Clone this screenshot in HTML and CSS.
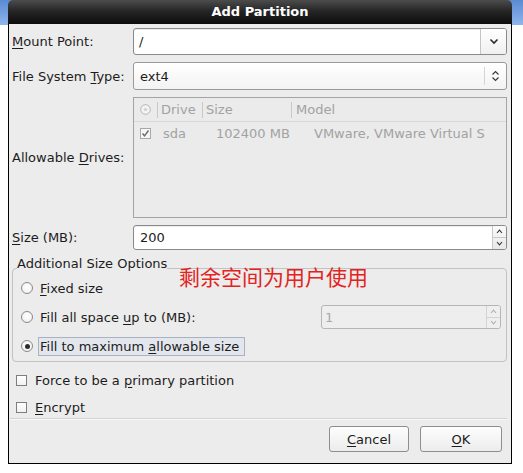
FILE: index.html
```html
<!DOCTYPE html>
<html>
<head>
<meta charset="utf-8">
<link rel="stylesheet" href="styles.css">
</head>
<body>
<div class="window">
  <div class="titlebar">Add Partition</div>
  <div class="content">
    <div class="form">
      <div class="lbl"><u>M</u>ount Point:</div>
      <div class="combo-entry">
        <span class="entry-text">/</span>
        <span class="combo-btn"><svg width="10" height="7" viewBox="0 0 10 7"><path d="M1.5 1.5 L5 5 L8.5 1.5" fill="none" stroke="#2a2a2a" stroke-width="1.6"/></svg></span>
      </div>

      <div class="lbl">File System <u>T</u>ype:</div>
      <div class="combo-select">
        <span class="entry-text">ext4</span>
        <span class="select-btn"><svg width="9" height="12" viewBox="0 0 9 12"><path d="M1.5 4.5 L4.5 1.5 L7.5 4.5 M1.5 7.5 L4.5 10.5 L7.5 7.5" fill="none" stroke="#3a3a3a" stroke-width="1.2"/></svg></span>
      </div>

      <div class="lbl">Allowable <u>D</u>rives:</div>
      <div class="drives">
        <div class="thead">
          <div class="th c0"><svg width="11" height="11" viewBox="0 0 11 11"><circle cx="5.5" cy="5.5" r="4.8" fill="#f4f4f4" stroke="#b4b4b4"/><circle cx="5.5" cy="5.5" r="1.6" fill="#cfcfcf"/></svg></div>
          <div class="th c1">Drive</div>
          <div class="th c2">Size</div>
          <div class="th c3">Model</div>
        </div>
        <div class="trow">
          <div class="td c0"><svg width="11" height="11" viewBox="0 0 11 11"><rect x="0.5" y="0.5" width="10" height="10" fill="#f6f6f6" stroke="#a8a8a8"/><path d="M2.5 5.5 L4.5 7.8 L8.5 2.5" fill="none" stroke="#6a6a6a" stroke-width="1.4"/></svg></div>
          <div class="td c1">sda</div>
          <div class="td c2">102400 MB</div>
          <div class="td c3">VMware, VMware Virtual S</div>
        </div>
      </div>

      <div class="lbl"><u>S</u>ize (MB):</div>
      <div class="spin">
        <span class="entry-text">200</span>
        <span class="spin-btns">
          <span class="sb"><svg width="7" height="5" viewBox="0 0 7 5"><path d="M1 4 L3.5 1.2 L6 4" fill="none" stroke="#333" stroke-width="1.1"/></svg></span>
          <span class="sb"><svg width="7" height="5" viewBox="0 0 7 5"><path d="M1 1 L3.5 3.8 L6 1" fill="none" stroke="#333" stroke-width="1.1"/></svg></span>
        </span>
      </div>
    </div>

    <fieldset class="sizeopts">
      <legend>Additional Size Options</legend>
      <div class="opt opt1">
        <span class="radio"></span><span class="opt-lbl"><u>F</u>ixed size</span>
      </div>
      <div class="opt opt2">
        <span class="radio"></span><span class="opt-lbl">Fill all space <u>u</u>p to (MB):</span>
        <div class="spin spin-dis">
          <span class="entry-text">1</span>
          <span class="spin-btns">
            <span class="sb"><svg width="7" height="5" viewBox="0 0 7 5"><path d="M1 4 L3.5 1.2 L6 4" fill="none" stroke="#b0b0b0" stroke-width="1.1"/></svg></span>
            <span class="sb"><svg width="7" height="5" viewBox="0 0 7 5"><path d="M1 1 L3.5 3.8 L6 1" fill="none" stroke="#b0b0b0" stroke-width="1.1"/></svg></span>
          </span>
        </div>
      </div>
      <div class="opt opt3">
        <span class="radio on"></span><span class="opt-lbl focus">Fill to maximum <u>a</u>llowable size</span>
      </div>
    </fieldset>

    <div class="check check1"><span class="cbox"></span><span>Force to be a <u>p</u>rimary partition</span></div>
    <div class="check check2"><span class="cbox"></span><span><u>E</u>ncrypt</span></div>

    <div class="sep"></div>

    <div class="buttons">
      <button class="btn btn-cancel"><u>C</u>ancel</button>
      <button class="btn btn-ok"><u>O</u>K</button>
    </div>
  </div>
  <div class="annot">剩余空间为用户使用</div>
</div>
</body>
</html>
```

FILE: styles.css
```css
* { box-sizing: border-box; }
html, body { margin: 0; padding: 0; }
body {
  width: 523px;
  height: 473px;
  overflow: hidden;
  background-color: #ffffff;
  background-image: linear-gradient(to bottom, #5a8ad3, #8fb6ec);
  background-repeat: no-repeat;
  background-size: 100% 25px;
  font-family: "DejaVu Sans", sans-serif;
  font-size: 13px;
  color: #1c1c1c;
}
u { text-decoration: underline; text-underline-offset: 2px; }

.window {
  position: relative;
  margin-left: 8px;
  width: 504px;
}
.titlebar {
  height: 24px;
  line-height: 24px;
  background: linear-gradient(to bottom, #4c4c4c, #262626 45%, #0c0c0c);
  border-radius: 5px 5px 0 0;
  color: #ffffff;
  font-weight: bold;
  text-align: center;
}
.content {
  background: #ececec;
  border: 1px solid #000;
  border-top: none;
  padding: 4px 4px 11px 3px;
}

.form {
  display: grid;
  grid-template-columns: 121px 1fr;
  row-gap: 7px;
  align-items: center;
}
.lbl { white-space: nowrap; }

.combo-entry, .combo-select, .spin {
  display: flex;
  align-items: stretch;
  border: 1px solid #8a8a8a;
  border-radius: 3px;
  background: #ffffff;
  box-shadow: inset 0 1px 1px rgba(0,0,0,0.08);
}
.combo-entry { height: 27px; }
.combo-select {
  height: 28px;
  background: linear-gradient(to bottom, #ffffff, #f3f3f3);
  border-color: #9a9a9a;
  box-shadow: none;
}
.spin { height: 25px; }
.entry-text {
  flex: 1;
  display: flex;
  align-items: center;
  padding-left: 6px;
}
.combo-entry .entry-text { padding-left: 5px; }
.combo-btn {
  width: 26px;
  display: flex;
  align-items: center;
  justify-content: center;
  border-left: 1px solid #c4c4c4;
  background: linear-gradient(to bottom, #ffffff, #f0f0f0);
  border-radius: 0 2px 2px 0;
}
.select-btn {
  width: 22px;
  display: flex;
  align-items: center;
  justify-content: center;
  border-left: 1px solid #d4d4d4;
  margin: 4px 0;
}
.spin-btns {
  width: 14px;
  display: flex;
  flex-direction: column;
  border-left: 1px solid #c8c8c8;
  background: linear-gradient(to bottom, #fbfbfb, #e8e8e8);
  border-radius: 0 2px 2px 0;
}
.sb {
  flex: 1;
  display: flex;
  align-items: center;
  justify-content: center;
}
.sb + .sb { border-top: 1px solid #c8c8c8; }

.drives {
  height: 121px;
  border: 1px solid #a4a4a4;
  background: #ebebeb;
  color: #a2a2a2;
}
.thead, .trow { display: flex; }
.thead {
  height: 24px;
  border-bottom: 1px solid #d8d8d8;
  align-items: center;
}
.th { height: 16px; line-height: 16px; }
.thead .c0 { width: 23px; padding-left: 6px; display: flex; align-items: center; }
.thead .c1 { width: 45px; border-left: 1px solid #c8c8c8; padding-left: 3px; }
.thead .c2 { width: 89px; border-left: 1px solid #c8c8c8; padding-left: 3px; }
.thead .c3 { flex: 1; border-left: 1px solid #c8c8c8; padding-left: 4px; }
.trow { height: 22px; align-items: center; }
.trow .c0 { width: 23px; padding-left: 6px; display: flex; align-items: center; }
.trow .c1 { width: 45px; padding-left: 6px; }
.trow .c2 { width: 89px; padding-left: 14px; white-space: nowrap; }
.trow .c3 { flex: 1; padding-left: 23px; white-space: nowrap; overflow: hidden; }

.sizeopts {
  margin: 6px 0 0 0;
  border: 1px solid #c2c2c2;
  border-radius: 4px;
  padding: 0 5px 5px 4px;
  min-width: 0;
}
.sizeopts legend {
  padding: 0 0 8px 0;
  line-height: 16px;
  height: 24px;
}
.opt { display: flex; align-items: center; }
.opt1 { height: 16px; }
.opt2 { height: 24px; margin-top: 9px; }
.opt3 { height: 20px; margin-top: 7px; }
.radio {
  width: 12px;
  height: 12px;
  border-radius: 50%;
  border: 1px solid #8a8a8a;
  background: radial-gradient(circle at 50% 40%, #ffffff, #ececec);
  margin-left: 4px;
  margin-right: 7px;
  position: relative;
  flex: none;
}
.radio.on::after {
  content: "";
  position: absolute;
  left: 2.5px;
  top: 2.5px;
  width: 5px;
  height: 5px;
  border-radius: 50%;
  background: #2c2c2c;
}
.opt3 .radio { margin-right: 5px; }
.opt-lbl.focus {
  border: 1px solid #a9b3bf;
  background: #e3e7ed;
  padding: 1px 5px 0 1px;
  height: 19px;
  line-height: 16px;
}
.spin-dis {
  margin-left: auto;
  margin-right: 0;
  width: 180px;
  height: 24px;
  background: #eeeeee;
  border-color: #b6b6b6;
  color: #a8a8a8;
  box-shadow: none;
}
.spin-dis .entry-text { padding-left: 3px; }
.spin-dis .spin-btns {
  background: #efefef;
  border-left-color: #d4d4d4;
}
.spin-dis .sb + .sb { border-top-color: #d4d4d4; }

.check {
  display: flex;
  align-items: center;
  height: 18px;
  margin-top: 9px;
}
.check1 { margin-top: 9px; }
.cbox {
  width: 11px;
  height: 11px;
  border: 1px solid #7e7e7e;
  background: linear-gradient(to bottom, #ffffff, #f1f1f1);
  margin-left: 4px;
  margin-right: 8px;
  flex: none;
}

.sep {
  margin: 2px 0 0 -2px;
  height: 1px;
  background: #d2d2d2;
  box-shadow: 0 1px 0 #f8f8f8;
}

.buttons {
  display: flex;
  justify-content: flex-end;
  gap: 11px;
  margin-top: 7px;
  padding-right: 5px;
}
.btn {
  height: 26px;
  border: 1px solid #8e8e8e;
  border-radius: 3px;
  background: linear-gradient(to bottom, #fdfdfd, #ececec);
  font-family: "DejaVu Sans", sans-serif;
  font-size: 13px;
  color: #1c1c1c;
  padding: 0;
}
.btn-cancel { width: 80px; }
.btn-ok { width: 82px; }

.annot {
  position: absolute;
  left: 171px;
  top: 264px;
  font-family: "Noto Sans CJK SC", sans-serif;
  font-size: 21px;
  line-height: 24px;
  color: #e3231d;
  white-space: nowrap;
}
```
